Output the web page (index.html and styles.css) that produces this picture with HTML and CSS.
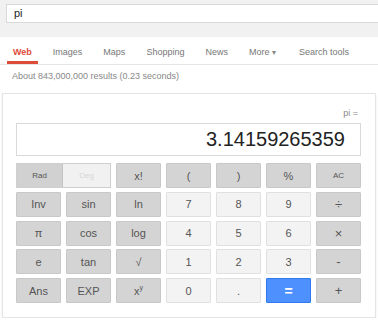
FILE: index.html
```html
<!DOCTYPE html>
<html lang="en">
<head>
  <meta charset="UTF-8">
  <title>pi - Search</title>
  <link rel="stylesheet" href="styles.css">
</head>
<body>

  <div class="barra">
    <div class="busqueda">pi</div>
  </div>

  <div class="pestanas">
    <span class="pestana activa">Web</span>
    <span class="pestana">Images</span>
    <span class="pestana">Maps</span>
    <span class="pestana">Shopping</span>
    <span class="pestana">News</span>
    <span class="pestana">More <span class="flecha">&#9662;</span></span>
    <span class="pestana herramientas">Search tools</span>
  </div>

  <div class="resultados">About 843,000,000 results (0.23 seconds)</div>

  <div class="calculadora">
    <div class="expresion">pi =</div>
    <div class="pantalla">3.14159265359</div>

    <div class="teclado">
      <div class="modo">
        <span class="rad">Rad</span>
        <span class="deg">Deg</span>
      </div>
      <button class="tecla">x!</button>
      <button class="tecla">(</button>
      <button class="tecla">)</button>
      <button class="tecla">%</button>
      <button class="tecla chica">AC</button>

      <button class="tecla">Inv</button>
      <button class="tecla">sin</button>
      <button class="tecla">ln</button>
      <button class="tecla clara">7</button>
      <button class="tecla clara">8</button>
      <button class="tecla clara">9</button>
      <button class="tecla op">&divide;</button>

      <button class="tecla">&pi;</button>
      <button class="tecla">cos</button>
      <button class="tecla">log</button>
      <button class="tecla clara">4</button>
      <button class="tecla clara">5</button>
      <button class="tecla clara">6</button>
      <button class="tecla op">&times;</button>

      <button class="tecla">e</button>
      <button class="tecla">tan</button>
      <button class="tecla">&radic;</button>
      <button class="tecla clara">1</button>
      <button class="tecla clara">2</button>
      <button class="tecla clara">3</button>
      <button class="tecla op">-</button>

      <button class="tecla">Ans</button>
      <button class="tecla">EXP</button>
      <button class="tecla">x<sup>y</sup></button>
      <button class="tecla clara">0</button>
      <button class="tecla clara">.</button>
      <button class="tecla igual">=</button>
      <button class="tecla op">+</button>
    </div>
  </div>

</body>
</html>
```

FILE: styles.css
```css
body {
  margin: 0;
  font-family: "Liberation Sans", Arial, sans-serif;
  background: white;
  color: #444;
}

.barra {
  background: #f1f1f1;
  padding: 4px 0 14px 6px;
}

.busqueda {
  height: 17px;
  line-height: 17px;
  background: white;
  border: 1px solid #d9d9d9;
  border-right: none;
  padding-left: 7px;
  font-size: 11px;
  color: #222;
}

.pestanas {
  display: flex;
  gap: 9px;
  padding-left: 7px;
  border-bottom: 1px solid #e5e5e5;
}

.pestana {
  padding: 10px 6px 3px;
  line-height: 11px;
  font-size: 9px;
  color: #777;
  border-bottom: 3px solid transparent;
}

.pestana.activa {
  color: #dd4b39;
  font-weight: bold;
  border-bottom-color: #dd4b39;
}

.flecha {
  font-size: 8px;
  color: #888;
}

.herramientas {
  margin-left: 2px;
}

.resultados {
  padding: 6px 0 0 12px;
  line-height: 11px;
  font-size: 9px;
  color: #888;
  height: 22px;
}

.calculadora {
  margin: 0 2px;
  border: 1px solid #e4e4e4;
  box-shadow: 0 1px 2px rgba(0,0,0,0.08);
  padding: 14px 14px 14px 13px;
}

.expresion {
  text-align: right;
  font-size: 9px;
  line-height: 11px;
  color: #888;
  padding-right: 3px;
}

.pantalla {
  margin-top: 4px;
  height: 31px;
  line-height: 31px;
  border: 1px solid #d9d9d9;
  text-align: right;
  padding-right: 15px;
  font-size: 20px;
  color: #222;
}

.teclado {
  margin-top: 7px;
  display: grid;
  grid-template-columns: repeat(7, 45px);
  grid-auto-rows: 25px;
  column-gap: 5px;
  row-gap: 3.75px;
}

.tecla {
  margin: 0;
  padding: 0;
  font-family: inherit;
  font-size: 11px;
  color: #555;
  background: #d4d4d4;
  border: 1px solid #c8c8c8;
  border-radius: 1px;
}

.tecla sup {
  font-size: 7px;
}

.tecla.chica {
  font-size: 8px;
}

.tecla.op {
  font-size: 13px;
}

.tecla.clara {
  background: #f3f3f3;
  border-color: #e0e0e0;
}

.tecla.igual {
  background: #4d90fe;
  border-color: #3079ed;
  color: white;
  font-size: 14px;
  font-weight: bold;
}

.modo {
  grid-column: span 2;
  display: flex;
  border: 1px solid #cfcfcf;
  font-size: 8px;
}

.rad, .deg {
  display: flex;
  align-items: center;
  justify-content: center;
}

.rad {
  width: 45px;
  background: #d1d1d1;
  color: #555;
  border-right: 1px solid #c4c4c4;
}

.deg {
  flex: 1;
  background: #f1f1f1;
  color: #d6d6d6;
}
```
